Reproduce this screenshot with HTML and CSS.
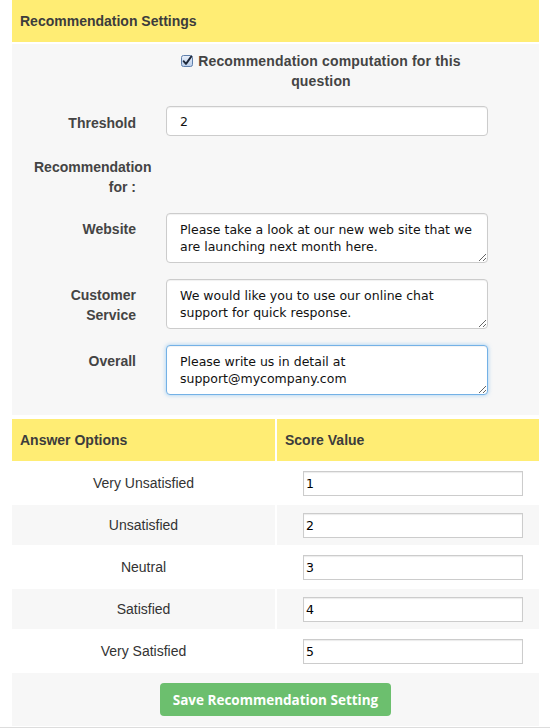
FILE: index.html
```html
<!DOCTYPE html>
<html>
<head>
<meta charset="utf-8">
<link rel="stylesheet" href="styles.css">
</head>
<body>
<div class="page">
  <div class="section-head">Recommendation Settings</div>
  <form class="panel">
    <div class="check-row">
      <label class="check-label"><svg class="checkbox" width="12" height="12" viewBox="0 0 12 12"><defs><linearGradient id="cb" x1="0" y1="0" x2="0" y2="1"><stop offset="0" stop-color="#e9f0fb"/><stop offset="1" stop-color="#b9cde9"/></linearGradient></defs><rect x="0.5" y="0.5" width="11" height="11" rx="2" fill="url(#cb)" stroke="#5f7fab"/><path d="M2.6 6.2 L5 8.9 L10.2 1.6" fill="none" stroke="#1c2638" stroke-width="1.9" stroke-linecap="round" stroke-linejoin="round"/></svg>Recommendation computation for this question</label>
    </div>
    <div class="form-row">
      <label class="control-label lbl-input">Threshold</label>
      <div class="controls"><input class="text-input" type="text" value="2"></div>
    </div>
    <div class="form-row">
      <label class="control-label lbl-plain">Recommendation for :</label>
    </div>
    <div class="form-row">
      <label class="control-label lbl-area">Website</label>
      <div class="controls"><textarea class="text-area">Please take a look at our new web site that we are launching next month here.</textarea></div>
    </div>
    <div class="form-row">
      <label class="control-label lbl-area">Customer Service</label>
      <div class="controls"><textarea class="text-area">We would like you to use our online chat support for quick response.</textarea></div>
    </div>
    <div class="form-row">
      <label class="control-label lbl-area">Overall</label>
      <div class="controls"><textarea class="text-area focused">Please write us in detail at support@mycompany.com</textarea></div>
    </div>
  </form>

  <div class="score-table">
    <div class="th">Answer Options</div>
    <div class="th">Score Value</div>

    <div class="td opt">Very Unsatisfied</div>
    <div class="td"><input class="score-input" type="text" value="1"></div>

    <div class="td opt alt">Unsatisfied</div>
    <div class="td alt"><input class="score-input" type="text" value="2"></div>

    <div class="td opt">Neutral</div>
    <div class="td"><input class="score-input" type="text" value="3"></div>

    <div class="td opt alt">Satisfied</div>
    <div class="td alt"><input class="score-input" type="text" value="4"></div>

    <div class="td opt">Very Satisfied</div>
    <div class="td"><input class="score-input" type="text" value="5"></div>

    <div class="action-cell"><button class="save-btn" type="button">Save Recommendation Setting</button></div>
  </div>
</div>
<div class="bottom-rule"></div>
</body>
</html>
```

FILE: styles.css
```css
html, body {
  margin: 0;
  padding: 0;
  background: #ffffff;
}

body {
  font-family: "Liberation Sans", Arial, sans-serif;
  font-size: 14px;
  color: #444444;
}

.page {
  width: 527px;
  padding: 0 11px 0 12px;
}

.section-head {
  height: 42px;
  line-height: 42px;
  padding-left: 8px;
  background: #ffed74;
  font-weight: bold;
  color: #3c3c3c;
  margin-bottom: 2px;
}

.panel {
  display: block;
  margin: 0;
  background: #f7f7f7;
  padding: 7px 51px 20px 22px;
}

.check-row {
  padding-left: 132px;
  margin-bottom: 15px;
}

.check-label {
  display: block;
  width: 310px;
  text-align: center;
  font-weight: bold;
  line-height: 20px;
  letter-spacing: 0.17px;
  color: #444444;
}

.checkbox {
  display: inline-block;
  vertical-align: -1px;
  margin-right: 5px;
}

.form-row {
  display: flex;
  align-items: flex-start;
  margin-bottom: 16px;
}

.form-row:last-child {
  margin-bottom: 0;
}

.control-label {
  width: 102px;
  flex: none;
  margin-right: 30px;
  text-align: right;
  font-weight: bold;
  line-height: 20px;
  color: #444444;
}

.lbl-input { padding-top: 7px; }
.lbl-plain { padding-top: 5px; }
.lbl-area { padding-top: 6px; }

.controls {
  width: 322px;
  flex: none;
}

.text-input,
.text-area {
  display: block;
  box-sizing: border-box;
  width: 322px;
  margin: 0;
  border: 1px solid #cccccc;
  border-radius: 4px;
  background: #ffffff;
  font-family: "DejaVu Sans", "Lucida Grande", sans-serif;
  font-size: 12.5px;
  color: #111111;
  box-shadow: inset 0 1px 1px rgba(0, 0, 0, 0.06);
  outline: none;
}

.text-input {
  height: 30px;
  padding: 0 13px;
}

.text-area {
  height: 50px;
  padding: 7px 10px 7px 13px;
  line-height: 17px;
  resize: vertical;
  overflow: hidden;
}

.text-area.focused {
  border-color: #74b1e6;
  box-shadow: inset 0 1px 1px rgba(0, 0, 0, 0.05), 0 0 4px rgba(82, 168, 236, 0.55);
}

.score-table {
  display: grid;
  grid-template-columns: 263px 262px;
  column-gap: 2px;
  row-gap: 2px;
  margin-top: 4px;
}

.th {
  height: 42px;
  line-height: 42px;
  padding-left: 8px;
  background: #ffed74;
  font-weight: bold;
  color: #3c3c3c;
}

.td {
  height: 40px;
  display: flex;
  align-items: center;
  background: #ffffff;
}

.td.alt {
  background: #f7f7f7;
}

.td.opt {
  justify-content: center;
  color: #333333;
}

.score-input {
  box-sizing: border-box;
  width: 220px;
  height: 25px;
  margin: 0 0 0 26px;
  padding: 0 2px;
  border: 1px solid #cccccc;
  border-radius: 0;
  background: #ffffff;
  box-shadow: inset 0 1px 1px rgba(0, 0, 0, 0.08);
  font-family: "DejaVu Sans", "Lucida Grande", sans-serif;
  font-size: 12.5px;
  color: #000000;
  outline: none;
}

.action-cell {
  grid-column: 1 / 3;
  height: 53px;
  background: #f7f7f7;
  display: flex;
  align-items: center;
  justify-content: center;
}

.save-btn {
  width: 231px;
  height: 33px;
  border: 0;
  border-radius: 4px;
  background: #6cbf6e;
  color: #ffffff;
  font-family: "Open Sans", sans-serif;
  font-weight: 700;
  font-size: 13.5px;
  padding: 0;
  cursor: pointer;
}

.bottom-rule {
  margin-top: 1px;
  height: 2px;
  background: #dddddd;
}
```
